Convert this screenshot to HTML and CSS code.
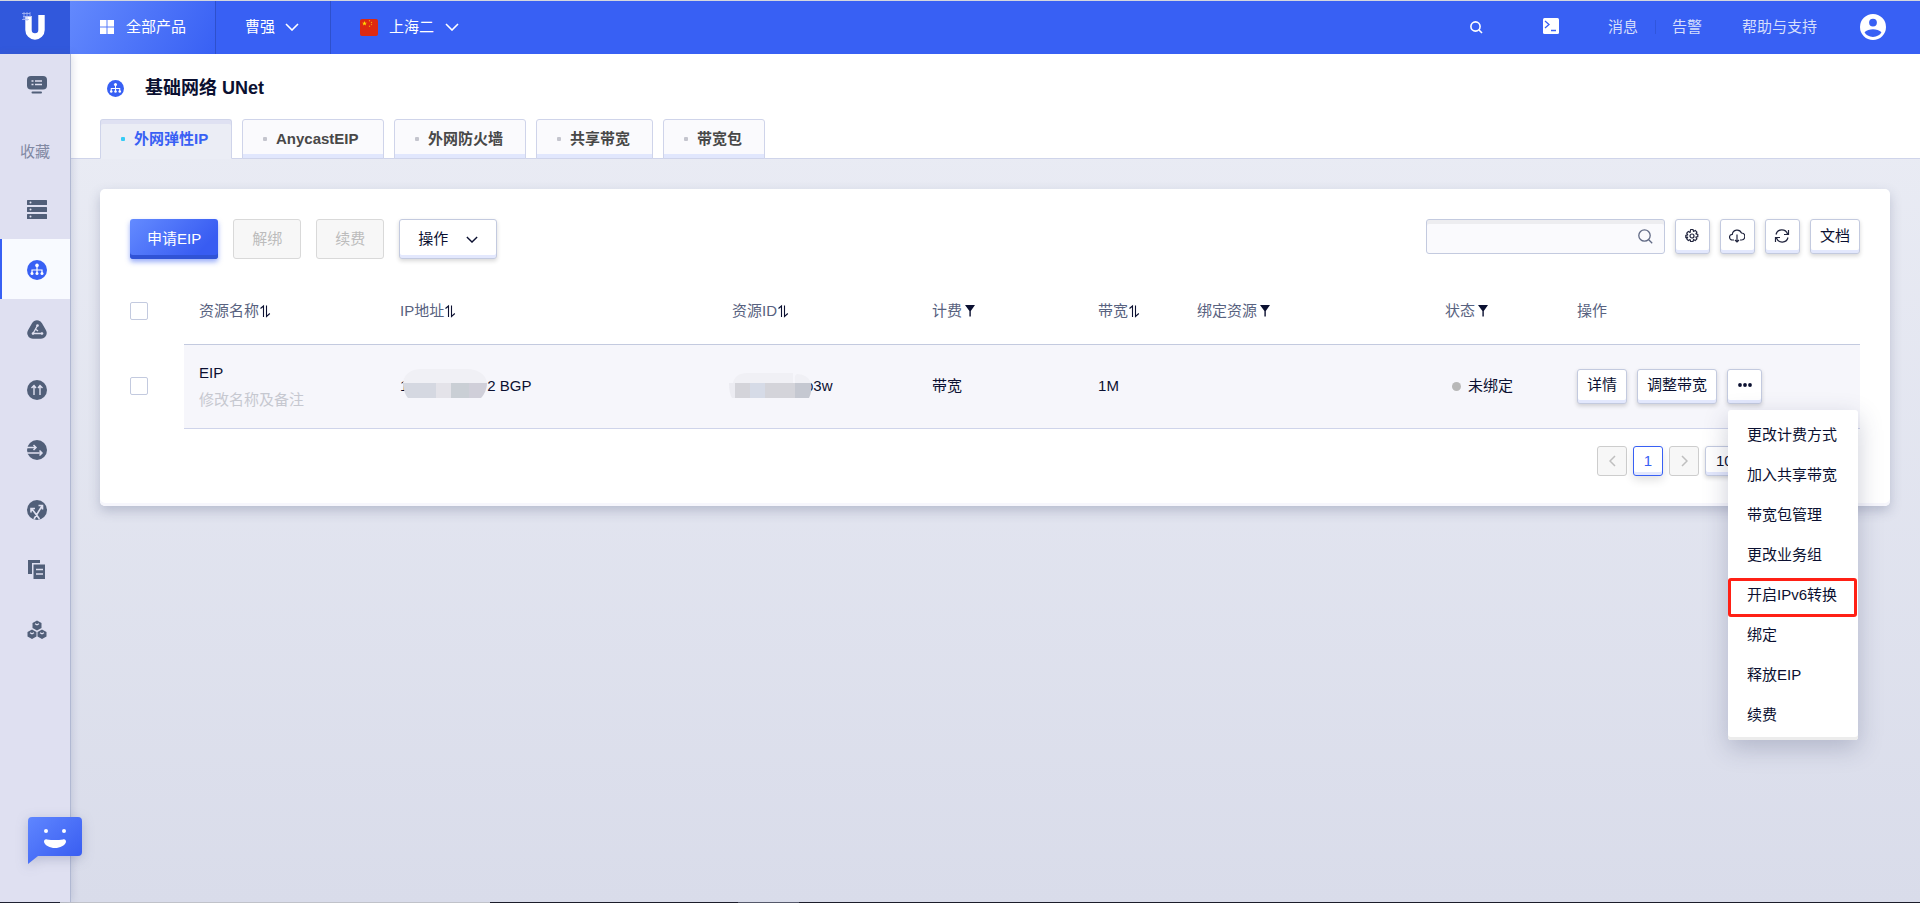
FILE: index.html
```html
<!DOCTYPE html>
<html lang="zh-CN">
<head>
<meta charset="utf-8">
<title>基础网络 UNet</title>
<link rel="stylesheet" href="styles.css">
</head>
<body>
<svg class="defs" aria-hidden="true">
  <symbol id="net" viewBox="0 0 20 20"><circle cx="10" cy="10" r="10" fill="#3860f4"/><path d="M10 5v9M5 14v-4h10v4" fill="none" stroke="#fff" stroke-width="1.2"/><circle cx="10" cy="5.4" r="1.8" fill="#fff"/><circle cx="5" cy="13.6" r="1.5" fill="#fff"/><circle cx="10" cy="13.6" r="1.5" fill="#fff"/><circle cx="15" cy="13.6" r="1.5" fill="#fff"/></symbol>
  <symbol id="down" viewBox="0 0 14 8"><path d="M1 1l6 6 6-6" fill="none" stroke="currentColor" stroke-width="1.6"/></symbol>
  <symbol id="sort" viewBox="0 0 12 14"><path d="M1.500 4.500L4.500 2V13M7.500 1.500V12.500L10.800 9.500" fill="none" stroke="#0b1031" stroke-width="1.100"/></symbol>
  <symbol id="filter" viewBox="0 0 10 12"><path d="M0 0h10L5.800 6V11.500H4.400V6z" fill="#0b1031"/></symbol>
</svg>
<header class="topbar">
  <a class="logo" href="#" aria-label="首页"><svg width="26" height="28" viewBox="0 0 26 28"><path d="M6.500 4v14a6.500 6.500 0 0 0 13 0V3" fill="none" stroke="#fff" stroke-width="6.400"/><path d="M0 1.500h8M1 4.500h8M0 7.500h7M2 0v8M5 0v9M8 0v5" stroke="#a9b9f5" stroke-width=".8"/></svg></a>
  <button class="products"><svg width="14" height="14" viewBox="0 0 14 14"><path d="M0 0h6.500v6.500H0zM7.500 0H14v6.500H7.500zM0 7.500h6.500V14H0zM7.500 7.500H14V14H7.500z" fill="#fff"/></svg>全部产品</button>
  <button class="project">曹强<svg width="14" height="8"><use href="#down"/></svg></button>
  <button class="region"><svg width="18" height="17" viewBox="0 0 18 17"><rect width="18" height="17" rx="2" fill="#de2910"/><path d="M4.500 2l.7 1.700h1.800L5.500 4.800l.6 1.800-1.600-1.100-1.600 1.100.6-1.800L2 3.700h1.800z" fill="#ffde00"/><g fill="#f0a010"><circle cx="9.500" cy="1.800" r=".7"/><circle cx="11.500" cy="3.500" r=".7"/><circle cx="11.500" cy="5.600" r=".7"/><circle cx="9.500" cy="7.300" r=".7"/></g></svg>上海二<svg width="14" height="8"><use href="#down"/></svg></button>
  <nav class="tools">
    <button aria-label="搜索"><svg width="13" height="13" viewBox="0 0 13 13" fill="none" stroke="#fff" stroke-width="1.600"><circle cx="5.500" cy="5.500" r="4.600"/><path d="M9 9l3 3"/></svg></button>
    <button class="terminal" aria-label="终端"><svg width="16" height="16" viewBox="0 0 16 16"><rect width="16" height="16" rx="1.500" fill="#fff"/><path d="M2 3l4 3.500L2 10M8 12.500h5" fill="none" stroke="#3860f4" stroke-width="1.300"/></svg></button>
    <a class="message" href="#">消息</a>
    <a class="alarm" href="#">告警</a>
    <a class="help" href="#">帮助与支持</a>
    <button aria-label="账户"><svg width="26" height="26" viewBox="2 2 20 20"><path fill="#fff" d="M12 2a10 10 0 1 0 0 20 10 10 0 0 0 0-20zm0 3.600a3 3 0 1 1 0 6 3 3 0 0 1 0-6zm0 14c-3 0-5.500-1.500-6.500-3.600 1.200-1.600 4.300-2.300 6.500-2.300s5.300.7 6.500 2.300c-1 2.100-3.500 3.600-6.500 3.600z"/></svg></button>
  </nav>
</header>
<div class="shell">
  <aside class="sidebar">
    <a href="#" aria-label="控制台"><svg width="20" height="18" viewBox="0 0 20 18"><rect width="20" height="13.500" rx="4" fill="#515f79"/><rect x="4.500" y="15.500" width="10.500" height="2" rx="1" fill="#515f79"/><path d="M4.500 5h2M8 5h7M4.500 8.500h2M8 8.500h7" stroke="#dfe0f0" stroke-width="1.500"/></svg></a>
    <span class="fav">收藏</span>
    <a href="#" aria-label="主机"><svg width="20" height="19" viewBox="0 0 20 19"><g fill="#515f79"><rect width="20" height="5" rx=".5"/><rect y="7" width="20" height="5" rx=".5"/><rect y="14" width="20" height="5" rx=".5"/></g><g fill="#dfe0f0"><circle cx="3.500" cy="2.500" r="1"/><circle cx="3.500" cy="9.500" r="1"/><circle cx="3.500" cy="16.500" r="1"/></g></svg></a>
    <a class="on" href="#" aria-label="网络"><svg width="20" height="20"><use href="#net"/></svg></a>
    <a href="#" aria-label="对象存储"><svg width="20" height="19" viewBox="0 0 20 19"><path d="M10 6L6 13h8z" fill="#515f79" stroke="#515f79" stroke-width="11.500" stroke-linejoin="round"/><path d="M10.500 5.500L6 13.500h9M9 9.500l2 1.500" fill="none" stroke="#dfe0f0" stroke-width="1.300"/><g fill="#dfe0f0"><circle cx="10.500" cy="5.500" r="1.300"/><circle cx="6" cy="13.500" r="1.300"/><circle cx="15" cy="13.500" r="1.300"/></g></svg></a>
    <a href="#" aria-label="负载均衡"><svg width="20" height="20" viewBox="0 0 20 20"><circle cx="10" cy="10" r="10" fill="#515f79"/><path d="M7 15V6M4.500 8L7 5.500 9 8M13 15V6M11 8l2-2.500L15.500 8" fill="none" stroke="#dfe0f0" stroke-width="1.400"/></svg></a>
    <a href="#" aria-label="专线"><svg width="20" height="20" viewBox="0 0 20 20"><circle cx="10" cy="10" r="10" fill="#515f79"/><path d="M0 7.500h9M6.500 5L9 7.500 6.500 10M0 13h15M12.500 10.500L15 13l-2.500 2.500" fill="none" stroke="#dfe0f0" stroke-width="1.500"/></svg></a>
    <a href="#" aria-label="路由"><svg width="20" height="20" viewBox="0 0 20 20"><circle cx="10" cy="10" r="10" fill="#515f79"/><path d="M12.500 19L5 9M4 12.500V8.500H8M7 19l8-13M11.500 5.500h4V9.500" fill="none" stroke="#dfe0f0" stroke-width="1.600"/></svg></a>
    <a href="#" aria-label="镜像"><svg width="17" height="19" viewBox="0 0 17 19"><path d="M0 0h12v3H4v11H0z" fill="#515f79"/><rect x="5.500" y="4.500" width="11.500" height="14.500" fill="#515f79"/><path d="M8 9.500h7M8 14h7" stroke="#dfe0f0" stroke-width="1.300"/></svg></a>
    <a href="#" aria-label="集群"><svg width="20" height="20" viewBox="0 0 20 20"><g fill="#515f79"><path d="M10 .5l4.500 2.500v5L10 10.500 5.500 8V3zM5 9.500l4.500 2.500v4.500L5 19 .5 16.500V12zM15 9.500l4.500 2.500v4.500L15 19l-4.500-2.500V12z"/></g><path d="M8 3.800l2 1 2-1M3 12.800l2 1 2-1M13 12.800l2 1 2-1" fill="none" stroke="#dfe0f0" stroke-width="1.200"/></svg></a>
  </aside>
  <main class="main">
    <div class="head">
      <h1><svg width="17" height="17"><use href="#net"/></svg>基础网络 UNet</h1>
      <nav class="tabs">
        <a class="tab on" href="#">外网弹性IP</a>
        <a class="tab wide" href="#">AnycastEIP</a>
        <a class="tab" href="#">外网防火墙</a>
        <a class="tab" href="#">共享带宽</a>
        <a class="tab" href="#">带宽包</a>
      </nav>
    </div>
    <section class="card">
      <div class="bar">
        <button class="btn tall primary">申请EIP</button>
        <button class="btn tall off" disabled>解绑</button>
        <button class="btn tall off" disabled>续费</button>
        <button class="btn tall drop">操作<svg width="12" height="7"><use href="#down"/></svg></button>
        <div class="right">
          <label class="search"><input type="text" aria-label="搜索资源"><svg width="15" height="15" viewBox="0 0 15 15" fill="none" stroke="#626b86" stroke-width="1.300"><circle cx="6.500" cy="6.500" r="5.700"/><path d="M10.500 10.500l3.700 3.700"/></svg></label>
          <button class="btn icon" aria-label="设置"><svg width="16" height="16" viewBox="0 0 16 16" fill="none" stroke="#20243d" stroke-width="1.200" stroke-linejoin="round"><circle cx="8" cy="8" r="2"/><path d="M6.800 1h2.400l.5 1.900 1.700-1 1.700 1.700-1 1.700 1.900.5v2.400l-1.900.5 1 1.700-1.700 1.700-1.700-1-.5 1.900H6.800l-.5-1.900-1.700 1-1.700-1.700 1-1.700L2 9.200V6.800l1.900-.5-1-1.700 1.700-1.700 1.700 1z" transform="translate(-.2 .5)"/></svg></button>
          <button class="btn icon" aria-label="下载"><svg width="16" height="14" viewBox="0 0 16 14" fill="none" stroke="#20243d" stroke-width="1.200"><path d="M5 11H3.500A2.800 2.800 0 0 1 3.300 5.300 4.800 4.800 0 0 1 12.500 4 3.500 3.500 0 0 1 12 11h-1M8 5.500V13M6 11l2 2 2-2"/></svg></button>
          <button class="btn icon" aria-label="刷新"><svg width="16" height="14" viewBox="0 0 16 14" fill="none" stroke="#20243d" stroke-width="1.200"><path d="M2 5.500A6 6 0 0 1 13.500 5M14.500 1v4.500H10M14 8.500A6 6 0 0 1 2.500 9M1.500 13V8.500H6"/></svg></button>
          <button class="btn">文档</button>
        </div>
      </div>
      <table>
        <colgroup><col class="c0"><col class="c1"><col class="c2"><col class="c3"><col class="c4"><col class="c5"><col class="c6"><col class="c7"><col></colgroup>
        <thead>
          <tr>
            <th class="check"><input type="checkbox" aria-label="全选"></th>
            <th>资源名称<svg width="12" height="14"><use href="#sort"/></svg></th>
            <th>IP地址<svg width="12" height="14"><use href="#sort"/></svg></th>
            <th>资源ID<svg width="12" height="14"><use href="#sort"/></svg></th>
            <th>计费<svg class="funnel" width="10" height="12"><use href="#filter"/></svg></th>
            <th>带宽<svg width="12" height="14"><use href="#sort"/></svg></th>
            <th>绑定资源<svg class="funnel" width="10" height="12"><use href="#filter"/></svg></th>
            <th>状态<svg class="funnel" width="10" height="12"><use href="#filter"/></svg></th>
            <th>操作</th>
          </tr>
        </thead>
        <tbody>
          <tr>
            <td class="check"><input type="checkbox" aria-label="选择 EIP"></td>
            <td><div class="name">EIP</div><div class="note">修改名称及备注</div></td>
            <td><div class="masked"><span>1</span><svg width="84" height="30" viewBox="0 0 84 30"><path d="M0 15C1 6 8 1 18 1h46c10 0 19 5 20 14z" fill="#f0f0f5"/><path d="M0 15h33v15H5C2 27 0 20 0 15z" fill="#d5d8e1"/><path d="M33 15h15v15H33z" fill="#e4e3e9"/><path d="M48 15h18v15H48z" fill="#cacfd5"/><path d="M66 15h18c0 6-3 12-6 15H66z" fill="#d0cfd9"/></svg>2 BGP</div></td>
            <td><div class="masked id"><svg width="83" height="30" viewBox="0 0 83 30"><path d="M6 15h60c0-4-1-8 2-9 6 0 12 3 14 9zM4 15C5 9 10 5 18 5h46v10z" fill="#f0f0f5"/><path d="M0 15h7v15H3C1 27 0 21 0 15z" fill="#ececf2"/><path d="M6 15h15v15H6zM36 15h30v15H36z" fill="#d4d4da"/><path d="M21 15h15v15H21z" fill="#d6dbe7"/><path d="M66 15h16c1 6 0 11-2 15H66z" fill="#c5c8d1"/></svg><span>p3w</span></div></td>
            <td>带宽</td>
            <td>1M</td>
            <td></td>
            <td><span class="state">未绑定</span></td>
            <td><div class="ops">
              <button class="btn">详情</button>
              <button class="btn">调整带宽</button>
              <div class="more">
                <button class="btn icon" aria-label="更多"><svg width="14" height="4" viewBox="0 0 14 4" fill="#0b1031"><circle cx="2" cy="2" r="1.900"/><circle cx="7" cy="2" r="1.900"/><circle cx="12" cy="2" r="1.900"/></svg></button>
                <div class="menu">
                  <button>更改计费方式</button>
                  <button>加入共享带宽</button>
                  <button>带宽包管理</button>
                  <button>更改业务组</button>
                  <button class="marked">开启IPv6转换</button>
                  <button>绑定</button>
                  <button>释放EIP</button>
                  <button>续费</button>
                </div>
              </div>
            </div></td>
          </tr>
        </tbody>
      </table>
      <div class="pager">
        <button class="page off" disabled aria-label="上一页"><svg width="7" height="12" viewBox="0 0 7 12"><path d="M6 1L1 6l5 5" fill="none" stroke="#bfbfbf" stroke-width="1.500"/></svg></button>
        <button class="page now">1</button>
        <button class="page off" disabled aria-label="下一页"><svg width="7" height="12" viewBox="0 0 7 12"><path d="M1 1l5 5-5 5" fill="none" stroke="#bfbfbf" stroke-width="1.500"/></svg></button>
        <select class="size" aria-label="每页条数"><option>10 条/页</option></select>
      </div>
    </section>
  </main>
</div>
<div class="edge"></div>
<button class="chat" aria-label="在线客服"><svg width="54" height="48" viewBox="0 0 54 48"><defs><linearGradient id="cg" x1="0" y1="0" x2="1" y2="1"><stop offset="0" stop-color="#5f86ff"/><stop offset="1" stop-color="#365af0"/></linearGradient></defs><path d="M0 4a4 4 0 0 1 4-4h46a4 4 0 0 1 4 4v31a4 4 0 0 1-4 4H10L0 47z" fill="url(#cg)"/><circle cx="18" cy="14" r="2" fill="#fff"/><circle cx="36" cy="14" r="2" fill="#fff"/><path d="M16 25c0-2 1-3 3-2.500 5 .7 11 .7 16 0 2-.5 3 .5 3 2.500-1 3.500-6 6-11 6s-10-2.500-11-6z" fill="#fff"/></svg></button>
</body>
</html>
```
FILE: styles.css
```css
* { box-sizing: border-box; }
body {
  margin: 0;
  min-height: 100vh;
  display: flex;
  flex-direction: column;
  border-top: 1px solid #d4d7de;
  font: 15px/20px "Liberation Sans", "Noto Sans CJK SC", sans-serif;
  color: #0b1031;
}
button, input, select { font: inherit; color: inherit; margin: 0; }
button { border: 0; padding: 0; background: none; }
a { color: inherit; text-decoration: none; }
svg { flex: none; display: block; }
.defs { display: none; }

.topbar {
  display: flex;
  height: 53px;
  background: #3860f4;
  color: #fff;
}
.topbar button, .topbar a { display: flex; align-items: center; padding-bottom: 1px; }
.topbar .logo { width: 70px; justify-content: center; background: #3158dc; padding-bottom: 4px; }
.topbar .products {
  width: 146px;
  padding-left: 30px;
  gap: 12px;
  background: linear-gradient(120deg, #6389fd, #3860f4);
  border-right: 1px solid #2e50cc;
}
.topbar .project { width: 115px; padding-left: 29px; gap: 10px; border-right: 1px solid #2e50cc; }
.topbar .region { padding-left: 29px; gap: 11px; }
.tools { display: flex; margin-left: auto; padding-right: 34px; }
.tools a { color: #d5defc; }
.tools .terminal { margin: 0 49px 0 60px; padding-bottom: 4px; }
.tools .message::after { content: ""; height: 14px; border-left: 1px solid #3056dd; margin: 0 16px 0 17px; }
.tools .help { margin: 0 43px 0 40px; }

.shell { flex: 1; display: flex; }
.sidebar {
  width: 71px;
  display: flex;
  flex-direction: column;
  background: #dfe0f1;
  border-right: 1px solid #b0b8d2;
  box-shadow: 1px 0 8px rgba(80, 95, 140, .2);
  z-index: 1;
}
.sidebar a { height: 60px; display: flex; align-items: center; justify-content: center; padding: 1px 0 0 3px; }
.sidebar .on { background: #f8faff; border-left: 2px solid #3860f4; padding-left: 1px; }
.fav { height: 65px; padding-top: 28px; text-align: center; color: #8189a3; }

.main { flex: 1; min-width: 0; background: linear-gradient(#ebedf5, #d9dcea); }
.head { background: #fff; border-bottom: 1px solid #cfd4ea; padding: 20px 29px 0; }
h1 { display: flex; align-items: center; gap: 21px; margin: 0 0 17px; padding-left: 7px; font-size: 18px; line-height: 28px; }
.tabs { display: flex; gap: 10px; margin-bottom: -1px; }
.tab {
  height: 40px;
  display: flex;
  align-items: center;
  gap: 9px;
  padding: 0 22px 0 20px;
  border: 1px solid #cfd4ea;
  border-radius: 3px 3px 0 0;
  background: #fafafd;
  box-shadow: inset 0 -4px #e1e7fd;
  color: #484848;
  font-weight: bold;
}
.tab::before { content: ""; width: 4px; height: 4px; border-radius: 1px; background: #c4c5ce; }
.tab.on { min-width: 132px; background: #ebedf5; border-bottom-color: #ebedf5; box-shadow: inset 0 4px #dfe1f2; color: #3860f4; }
.tab.on::before { background: #35cbf5; }
.tab.wide { min-width: 142px; }

.card {
  margin: 30px 30px 30px 29px;
  padding: 30px;
  background: #fff;
  border-radius: 5px;
  box-shadow: 0 5px 12px rgba(60, 70, 110, .25), inset 0 -3px #f6f6fc;
}
.bar { display: flex; align-items: flex-start; gap: 15px; margin-bottom: 19px; }
.right { display: flex; gap: 10px; margin-left: auto; }
.btn {
  height: 35px;
  padding: 0 9px 2px;
  display: flex;
  align-items: center;
  justify-content: center;
  white-space: nowrap;
  border: 1px solid #c3cadf;
  border-radius: 3px;
  background: #fff;
  box-shadow: inset 0 -3px #e3e8fd, 0 2px 4px rgba(0, 0, 0, .16);
}
.btn.icon { width: 35px; padding: 0 0 2px; }
.btn.tall { height: 40px; padding: 0 18px; }
.btn.tall.primary { padding: 0 17px; border: 0; color: #fff; background: linear-gradient(135deg, #648bff, #385cf2 80%); box-shadow: inset 0 -4px #3053d6, 0 3px 5px rgba(56, 96, 244, .5); }
.btn.off { color: #bcbcbc; background: #f7f7f7; border-color: #d9d9d9; box-shadow: none; }
.btn.drop { gap: 18px; }
.search {
  width: 239px;
  height: 35px;
  display: flex;
  align-items: center;
  padding: 0 11px;
  border: 1px solid #c3cadf;
  border-radius: 3px;
  background: #fafafd;
  box-shadow: inset 0 4px #ededf0;
}
.search input { flex: 1; min-width: 0; border: 0; padding: 0; outline: 0; background: none; }

table { width: 100%; table-layout: fixed; border-collapse: collapse; }
.c0 { width: 54px; }
.c1 { width: 11.62%; }
.c2 { width: 19.19%; }
.c3 { width: 11.56%; }
.c4 { width: 9.6%; }
.c5 { width: 5.72%; }
.c6 { width: 14.34%; }
.c7 { width: 7.63%; }
th, td { padding: 0 15px; text-align: left; white-space: nowrap; }
th { height: 66px; font-weight: normal; color: #586280; }
th svg { display: inline-block; vertical-align: -2px; }
th .funnel { margin-left: 3px; vertical-align: -1px; }
td { height: 84px; background: #f6f6fb; border-top: 1px solid #c3cadf; border-bottom: 1px solid #cfd4ea; }
.check { padding: 0; background: none; border: 0; }
.check input {
  appearance: none;
  display: block;
  width: 18px;
  height: 18px;
  border: 1px solid #c3cadf;
  border-radius: 2px;
  background: #fff;
}
.name, .note { line-height: 27px; }
.note { color: #c6c8d0; }
.masked { display: flex; align-items: center; height: 20px; }
.masked svg { margin: -12px 0 -6px -5px; }
.masked.id svg { margin-left: -3px; z-index: 1; }
.masked.id span { margin-left: -7px; }
.state { display: flex; align-items: center; gap: 7px; padding-left: 7px; }
.state::before { content: ""; width: 9px; height: 9px; border-radius: 50%; background: #b8b8b8; }
.ops { display: flex; gap: 10px; }
.more { position: relative; }
.menu {
  position: absolute;
  top: 41px;
  left: 1px;
  width: 130px;
  padding: 5px 0;
  background: #fff;
  border-radius: 3px;
  box-shadow: inset 0 -3px #ececec, 0 8px 24px rgba(50, 60, 100, .25);
}
.menu button { display: block; width: 100%; height: 40px; padding-left: 19px; text-align: left; }
.menu .marked { position: relative; }
.menu .marked::after { content: ""; position: absolute; inset: 3px 1px -2px 0; border: 3px solid #ff2015; border-radius: 3px; }

.pager { display: flex; justify-content: flex-end; gap: 6px; margin: 17px 10px 0 0; }
.page { width: 30px; height: 30px; display: flex; align-items: center; justify-content: center; border: 1px solid #cdcdcd; border-radius: 3px; background: #f7f7f7; }
.now { border-color: #3860f4; background: #fff; color: #3860f4; box-shadow: inset 0 -3px #e3e8fd, 0 4px 10px rgba(0, 0, 0, .12); }
.size { width: 145px; height: 30px; padding-left: 6px; border: 1px solid #c3cadf; border-radius: 3px; background: #fff; box-shadow: inset 0 -3px #e3e8fd, 0 2px 4px rgba(0, 0, 0, .16); }

.edge { height: 1px; background: linear-gradient(90deg, #1b1c2a 60px, #c0c2c9 60px 490px, #1b1c2a 490px 738px, #55586a 738px 799px, #1b1c2a 799px); }
.chat { position: fixed; left: 28px; bottom: 38px; z-index: 2; filter: drop-shadow(0 3px 6px rgba(60, 70, 120, .25)); }
```
